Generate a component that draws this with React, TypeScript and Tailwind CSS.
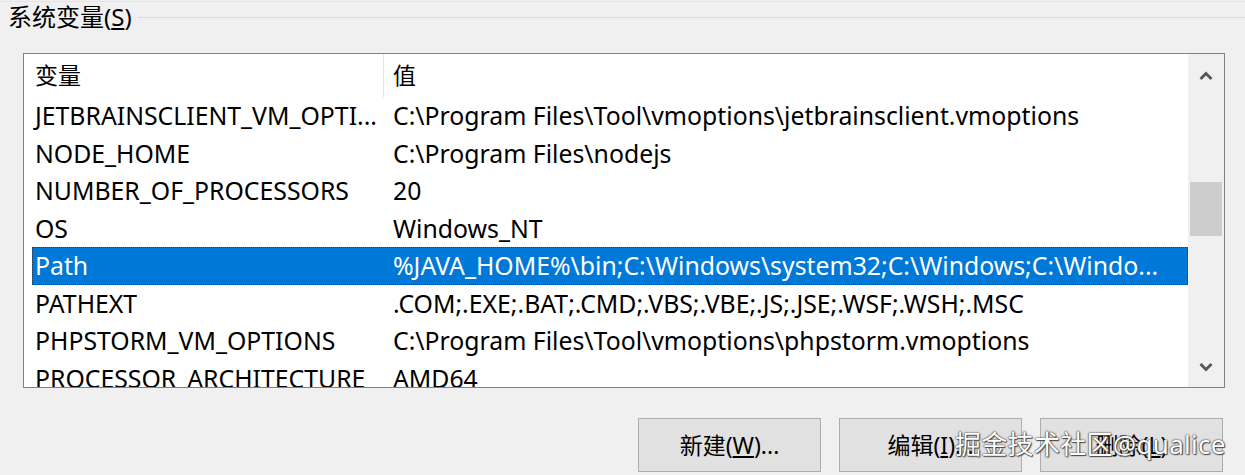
import { ReactNode } from "react";

const font = { fontFamily: '"Noto Sans", "Noto Sans CJK SC", sans-serif' };

const rows: [string, string][] = [
  ["JETBRAINSCLIENT_VM_OPTI...", "C:\\Program Files\\Tool\\vmoptions\\jetbrainsclient.vmoptions"],
  ["NODE_HOME", "C:\\Program Files\\nodejs"],
  ["NUMBER_OF_PROCESSORS", "20"],
  ["OS", "Windows_NT"],
  ["Path", "%JAVA_HOME%\\bin;C:\\Windows\\system32;C:\\Windows;C:\\Windo..."],
  ["PATHEXT", ".COM;.EXE;.BAT;.CMD;.VBS;.VBE;.JS;.JSE;.WSF;.WSH;.MSC"],
  ["PHPSTORM_VM_OPTIONS", "C:\\Program Files\\Tool\\vmoptions\\phpstorm.vmoptions"],
  ["PROCESSOR_ARCHITECTURE", "AMD64"],
];

function Btn({ children }: { children: ReactNode }) {
  return (
    <div className="w-[183px] h-[54px] bg-[#e1e1e1] border border-[#adadad] flex items-center justify-center text-[23px] text-black">
      {children}
    </div>
  );
}

export default function App() {
  return (
    <div className="w-[1245px] h-[475px] bg-[#f0f0f0] relative overflow-hidden text-black" style={font}>
      <div className="h-px bg-[#e4e4e4] mt-px" />

      {/* group title */}
      <div className="flex items-center h-[32px] -mt-[1px]">
        <span className="pl-[8px] pr-[6px] text-[24px] leading-none">
          系统变量(<span className="underline underline-offset-2">S</span>)
        </span>
        <div className="flex-1 h-px bg-[#dcdcdc]" />
      </div>

      {/* list box */}
      <div className="ml-[23px] mt-[20px] w-[1202px] h-[335px] border border-[#828282] bg-white flex">
        <div className="flex-1 flex flex-col overflow-hidden">
          <div className="h-[43px] flex items-center text-[23px] ml-[8px] shrink-0">
            <div className="w-[352px] pl-[3px] h-full flex items-center border-r border-[#e5e5e5]">变量</div>
            <div className="pl-[9px]">值</div>
          </div>
          {rows.map(([k, v], i) => {
            const sel = k === "Path";
            return (
              <div
                key={i}
                className={
                  sel
                    ? "h-[37.5px] shrink-0 ml-[8px] flex items-center text-[24.8px] whitespace-nowrap bg-[#0078d7] text-white border border-dotted border-[#1a3f66]"
                    : "h-[37.5px] shrink-0 ml-[8px] flex items-center text-[24.8px] whitespace-nowrap border border-transparent"
                }
              >
                <div className="w-[351px] pl-[2px] overflow-hidden">{k}</div>
                <div className="pl-[9px]">{v}</div>
              </div>
            );
          })}
        </div>

        {/* scrollbar */}
        <div className="w-[36px] bg-[#f0f0f0] flex flex-col shrink-0">
          <div className="h-[44px] flex items-center justify-center shrink-0">
            <svg width="14" height="10" viewBox="0 0 14 10">
              <path d="M1.5 8 L7 2.5 L12.5 8" fill="none" stroke="#555" strokeWidth="2.8" />
            </svg>
          </div>
          <div className="h-[84px] shrink-0" />
          <div className="h-[54px] mx-[2px] bg-[#cdcdcd] shrink-0" />
          <div className="flex-1" />
          <div className="h-[40px] flex items-center justify-center shrink-0">
            <svg width="14" height="10" viewBox="0 0 14 10">
              <path d="M1.5 2 L7 7.5 L12.5 2" fill="none" stroke="#555" strokeWidth="2.8" />
            </svg>
          </div>
        </div>
      </div>

      {/* buttons */}
      <div className="flex justify-end gap-[18px] pr-[22px] mt-[30px]">
        <Btn>
          新建(<span className="underline underline-offset-2">W</span>)...
        </Btn>
        <Btn>
          编辑(<span className="underline underline-offset-2">I</span>)...
        </Btn>
        <Btn>
          删除(<span className="underline underline-offset-2">L</span>)
        </Btn>
      </div>

      {/* watermark */}
      <div
        className="absolute left-[955px] top-[425px] text-[26px] text-white whitespace-nowrap tracking-[0.3px]"
        style={{ textShadow: "0 0 2px #333, 0 0 1px #333, 1px 1px 1px #555" }}
      >
        掘金技术社区@qualice
      </div>
    </div>
  );
}
